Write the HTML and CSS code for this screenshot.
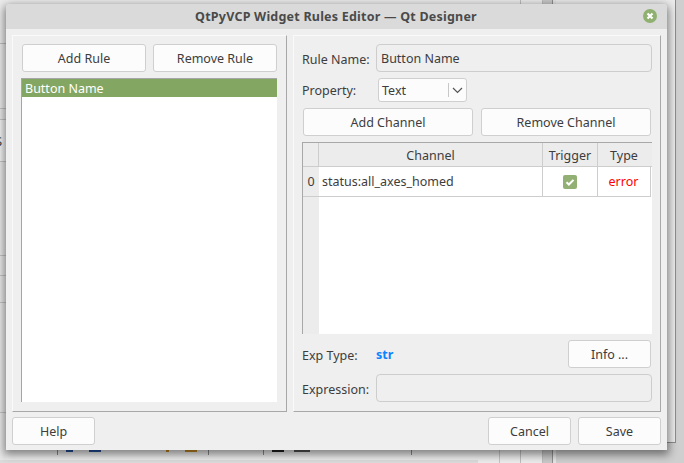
FILE: index.html
```html
<!DOCTYPE html>
<html lang="en">
<head>
<meta charset="utf-8">
<title>QtPyVCP Widget Rules Editor</title>
<link rel="stylesheet" href="styles.css">
</head>
<body>
<div class="desktop">
  <div class="bg-rear"></div>
  <div class="bg-rear-strip"></div>
  <div class="bg-left"></div>
  <div class="bg-s">S</div>
  <div class="bg-bottom">
    <i class="mark sep s1"></i><i class="mark blue b1"></i><i class="mark blue b2"></i>
    <i class="mark orange o1"></i><i class="mark orange o2"></i><i class="mark sep s2"></i>
    <i class="mark sep s3"></i><i class="mark dark d1"></i><i class="mark dark d2"></i>
    <i class="mark sep s4"></i><i class="mark sep s5"></i><i class="mark sep s6"></i>
  </div>
  <div class="window">
    <div class="titlebar">
      <span class="title">QtPyVCP Widget Rules Editor — Qt Designer</span>
      <span class="close"><svg width="14" height="14" viewBox="0 0 14 14"><circle cx="7" cy="7" r="7" fill="#8fb070"/><path d="M4.5 4.5l5 5M9.5 4.5l-5 5" stroke="#fff" stroke-width="2.2"/></svg></span>
    </div>
    <div class="content">
      <div class="panes">
        <section class="pane pane-left">
          <div class="btn-row">
            <button class="btn">Add Rule</button>
            <button class="btn">Remove Rule</button>
          </div>
          <div class="list">
            <div class="list-item">Button Name</div>
          </div>
        </section>
        <section class="pane pane-right">
          <div class="field-row first">
            <span class="label nudge">Rule Name:</span>
            <div class="input">Button Name</div>
          </div>
          <div class="field-row prop">
            <span class="label">Property:</span>
            <div class="combo">
              <span class="combo-text">Text</span>
              <span class="combo-arrow"><svg width="11" height="7" viewBox="0 0 11 7"><path d="M1 1l4.5 4.5L10 1" fill="none" stroke="#555" stroke-width="1.2"/></svg></span>
            </div>
          </div>
          <div class="chan-row">
            <button class="btn">Add Channel</button>
            <button class="btn">Remove Channel</button>
          </div>
          <div class="table">
            <div class="t-head">
              <div class="corner"></div>
              <div class="th">Channel</div>
              <div class="th">Trigger</div>
              <div class="th last">Type</div>
            </div>
            <div class="t-row">
              <div class="row-no">0</div>
              <div class="td td-chan">status:all_axes_homed</div>
              <div class="td td-check"><svg width="14" height="14" viewBox="0 0 14 14"><rect width="14" height="14" rx="2" fill="#93b074"/><path d="M3.5 7.2l2.4 2.3 4.6-4.6" fill="none" stroke="#fff" stroke-width="2"/></svg></div>
              <div class="td td-type">error</div>
            </div>
            <div class="t-empty"><div class="gutter"></div></div>
          </div>
          <div class="exp-row">
            <span class="label nudge">Exp Type:</span>
            <span class="exp-val">str</span>
            <button class="btn info">Info ...</button>
          </div>
          <div class="field-row expr">
            <span class="label nudge">Expression:</span>
            <div class="input"></div>
          </div>
        </section>
      </div>
      <div class="footer">
        <button class="btn foot">Help</button>
        <div class="foot-right">
          <button class="btn foot">Cancel</button>
          <button class="btn foot">Save</button>
        </div>
      </div>
    </div>
  </div>
</div>
</body>
</html>
```
FILE: styles.css
```css
* { box-sizing: border-box; }
html, body { margin: 0; padding: 0; }
body { width: 684px; height: 463px; overflow: hidden; font-family: "Noto Sans", sans-serif; font-size: 12.5px; color: #3d3d3d; }
.desktop { position: relative; width: 684px; height: 463px; background: linear-gradient(90deg, #ededed 0 555px, #cfcfcf 555px); overflow: hidden; }
.bg-left { position: absolute; left: 0; top: 0; width: 6px; height: 463px; background: linear-gradient(#ebebeb 0 43px, #bfbfbf 43px 44px, #ebebeb 44px 108px, #c4c4c4 108px 109px, #e9e9e9 109px 119px, #c4c4c4 119px 120px, #f2f2f2 120px 161px, #c4c4c4 161px 162px, #e9e9e9 162px 255px, #c4c4c4 255px 256px, #e9e9e9 256px 275px, #c4c4c4 275px 276px, #e9e9e9 276px 302px, #c4c4c4 302px 303px, #e9e9e9 303px 412px, #c4c4c4 412px 413px, #e9e9e9 413px); }
.bg-s { position: absolute; left: -5px; top: 132px; font-size: 13px; color: #444; }
.bg-rear { position: absolute; left: 555px; top: -2px; width: 121px; height: 445px; background: #ebebeb; border-right: 1px solid #8c8c8c; border-bottom: 1px solid #8c8c8c; }
.bg-rear-strip { position: absolute; left: 520px; top: 0; width: 36px; height: 463px; background: linear-gradient(90deg, #bdbdbd 0 1px, #ececec 1px 22px, #bdbdbd 22px 23px, #c9c9c9 23px 32px, #8f8f8f 32px 33px, #e5e5e5 33px); }
.bg-bottom { position: absolute; left: 0; top: 450px; width: 684px; height: 13px; }
.mark { position: absolute; top: 0; display: block; }
.sep { width: 1px; height: 5px; background: #8a8a8a; }
.s1 { left: 57px; } .s2 { left: 208px; } .s3 { left: 263px; } .s4 { left: 411px; } .s5 { left: 499px; height: 13px; background: #c4c4c4; }
.s6 { left: 0; top: 10px; width: 478px; height: 3px; background: #dcdcdc; }
.blue { height: 2px; background: #24519c; }
.b1 { left: 66px; width: 7px; } .b2 { left: 89px; width: 12px; }
.orange { height: 2px; background: #c78a22; }
.o1 { left: 166px; width: 3px; } .o2 { left: 185px; width: 12px; }
.dark { height: 2px; background: #222; }
.d1 { left: 272px; width: 12px; } .d2 { left: 294px; width: 16px; background: #555; }
.window { position: absolute; left: 6px; top: 4px; width: 661px; height: 446px; border-radius: 4px 4px 0 0; background: #efefef; box-shadow: 0 3px 9px 2px rgba(0,0,0,.45); display: flex; flex-direction: column; }
.titlebar { height: 25px; flex: none; background: #dadada; border-radius: 4px 4px 0 0; position: relative; display: flex; align-items: center; justify-content: center; }
.title { font-weight: 700; font-size: 12.5px; color: #4a4a4a; letter-spacing: .22px; margin-right: 1px; }
.close { position: absolute; right: 10px; top: 5px; height: 14px; line-height: 0; }
.content { flex: 1; display: flex; flex-direction: column; padding: 6px 6px 5px 6px; min-height: 0; }
.panes { display: flex; gap: 6px; height: 377px; flex: none; }
.pane { border-right: 1px solid #a8a8a8; border-bottom: 1px solid #a8a8a8; border-top: 1px solid #fafafa; border-left: 1px solid #fafafa; }
.pane-left { width: 275px; padding: 8px 8px 9px 8px; display: flex; flex-direction: column; gap: 6px; }
.pane-right { width: 369px; padding: 8px 8px 9px 8px; display: flex; flex-direction: column; }
.btn { font: inherit; color: inherit; background: #fbfcfb; border: 1px solid #cfcfcf; border-radius: 3px; height: 28px; padding: 0; text-align: center; }
.btn-row { display: flex; gap: 7px; padding: 0 1px; flex: none; }
.btn-row .btn { width: 124px; }
.list { flex: 1; background: #fff; border-left: 1px solid #a6a6a6; border-top: 1px solid #a6a6a6; width: 256px; }
.list-item { height: 18px; line-height: 20px; background: #84a663; color: #fff; padding-left: 3px; }
.field-row { display: flex; align-items: center; flex: none; }
.label { width: 74px; flex: none; }
.nudge { padding-top: 2px; }
.input { width: 276px; height: 28px; border: 1px solid #cdcdcd; border-radius: 4px; background: #efefef; line-height: 28px; padding-left: 4px; }
.prop { height: 24px; margin-top: 6px; }
.combo { width: 89px; height: 24px; margin-left: 2px; background: #fbfcfb; border: 1px solid #cfcfcf; border-radius: 3px; display: flex; align-items: center; }
.combo-text { flex: 1; padding-left: 3px; }
.combo-arrow { width: 18px; height: 14px; border-left: 1px solid #c8c8c8; display: flex; align-items: center; justify-content: center; }
.chan-row { display: flex; gap: 8px; margin-top: 6px; padding-left: 1px; flex: none; }
.chan-row .btn { width: 170px; }
.table { height: 192px; width: 350px; margin-top: 6px; flex: none; display: flex; flex-direction: column; border-top: 1px solid #a8a8a8; border-left: 1px solid #a8a8a8; background: #fff; }
.t-head { height: 24px; display: grid; grid-template-columns: 16px 224px 55px 54px; background: #ececec; border-bottom: 1px solid #cdcdcd; flex: none; }
.corner, .th { border-right: 1px solid #cdcdcd; }
.th { text-align: center; line-height: 25px; }
.th.last { border-right: 0; padding-right: 2px; }
.t-row { height: 30px; display: grid; grid-template-columns: 16px 224px 55px 53px; border-bottom: 1px solid #cdcdcd; flex: none; width: 348px; }
.row-no { background: #ececec; text-align: center; line-height: 29px; }
.td { border-right: 1px solid #cdcdcd; line-height: 29px; }
.td-chan { padding-left: 3px; }
.td-check { display: flex; align-items: center; justify-content: center; }
.td-type { color: #f00; text-align: center; padding-right: 1px; }
.t-empty { flex: 1; }
.gutter { width: 16px; height: 100%; background: #ececec; }
.exp-row { display: flex; align-items: center; height: 28px; margin-top: 6px; flex: none; }
.exp-val { color: #0a84ff; font-weight: 700; flex: 1; }
.info { width: 83px; margin-right: 1px; }
.expr { margin-top: 6px; }
.footer { display: flex; justify-content: space-between; margin-top: 5px; flex: none; }
.foot { width: 83px; }
.foot-right { display: flex; gap: 7px; }
```
